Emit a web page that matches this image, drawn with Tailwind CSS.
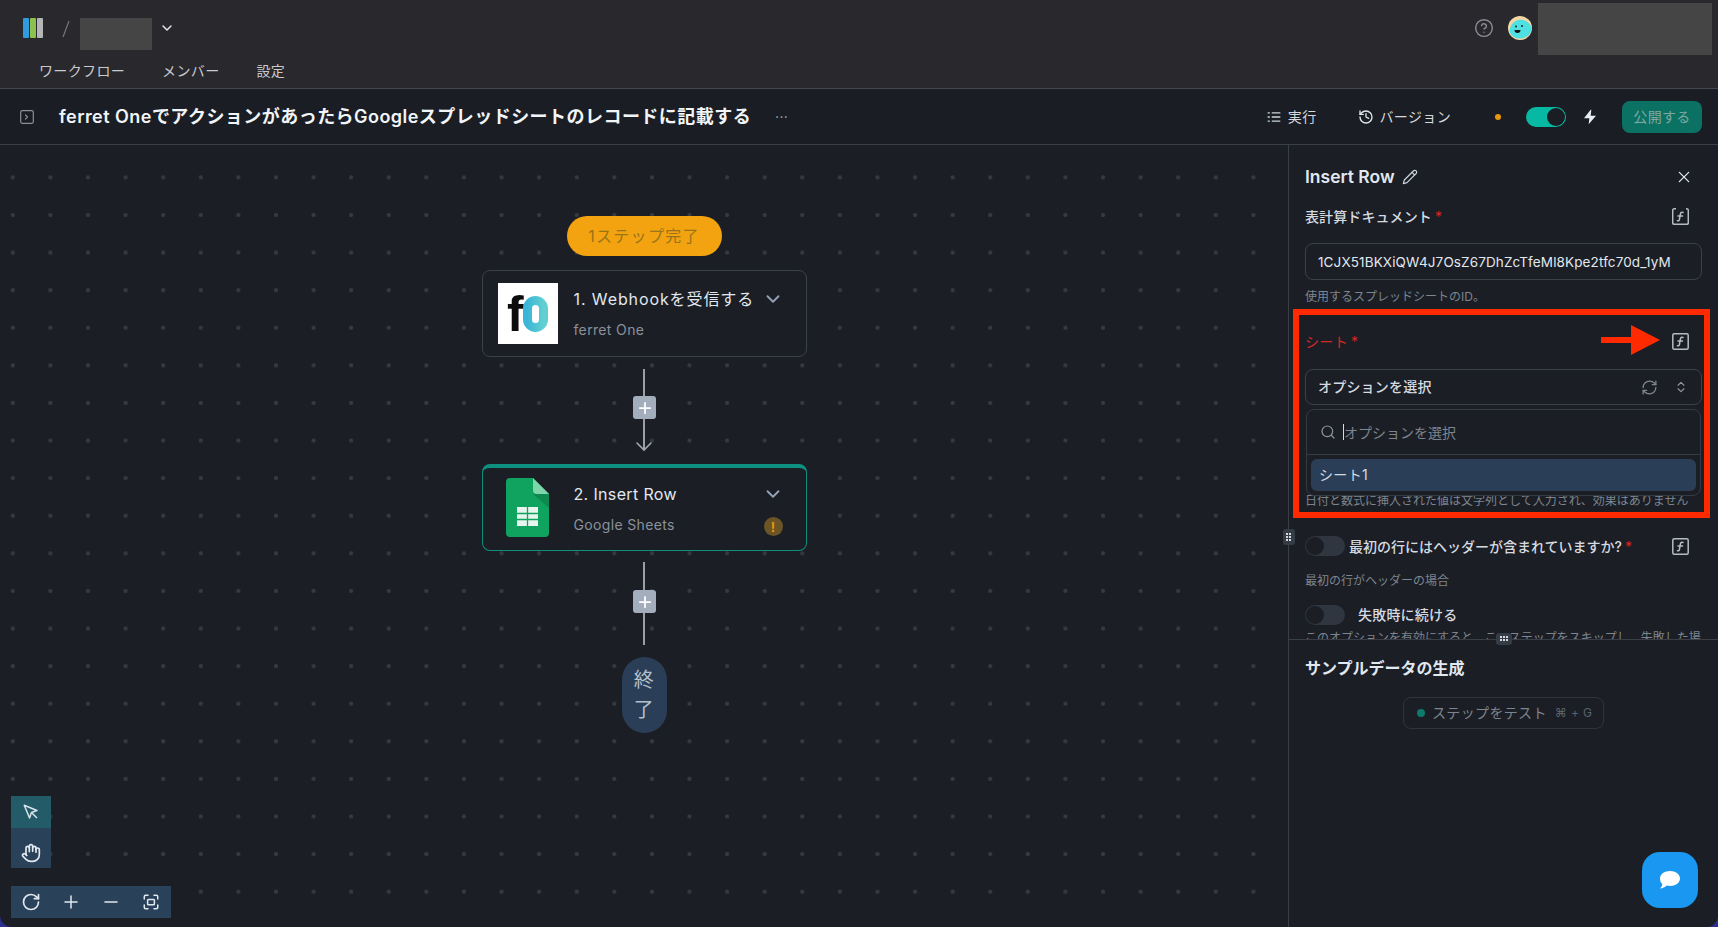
<!DOCTYPE html>
<html lang="ja">
<head>
<meta charset="utf-8">
<script src="https://cdn.jsdelivr.net/npm/@tailwindcss/browser@4"></script>
<title>Workflow</title>
</head>
<body class="bg-[#2b2f8f] overflow-hidden">
<div class="relative w-[1718px] h-[927px] flex flex-col overflow-hidden rounded-b-[12px] bg-[#1b1e24] font-['Inter','Noto_Sans_CJK_JP',sans-serif] text-[14px] tracking-wide text-[#e2e8f0]">

  <header class="h-[89px] shrink-0 bg-[#28282d] border-b border-[#44474d] flex flex-col">
    <div class="h-[58px] flex items-start pl-[23px] pr-[6px] pt-[3px]">
      <svg class="mt-[15px]" width="20" height="20" viewBox="0 0 20 20"><rect x="0" y="0" width="6" height="20" rx="1" fill="#2f9be0"/><rect x="7" y="0" width="6" height="20" rx="1" fill="#8cc152"/><rect x="14" y="0" width="6" height="20" rx="1" fill="#b4b6b8"/></svg>
      <svg class="mt-[17px] ml-[19px]" width="8" height="18" viewBox="0 0 8 18" fill="none" stroke="#77797e" stroke-width="1.200"><path d="M7 1 1 17"/></svg>
      <div class="mt-[15px] ml-[10px] w-[72px] h-[32px] bg-[#454545]"></div>
      <svg class="mt-[17px] ml-[7px]" width="16" height="16" viewBox="0 0 24 24" fill="none" stroke="#e5e7eb" stroke-width="2.200" stroke-linecap="round" stroke-linejoin="round"><path d="m6 9 6 6 6-6"/></svg>
      <div class="flex-1"></div>
      <svg class="mt-[15px]" width="20" height="20" viewBox="0 0 24 24" fill="none" stroke="#8d8f94" stroke-width="1.700" stroke-linecap="round" stroke-linejoin="round"><circle cx="12" cy="12" r="10"/><path d="M9.090 9a3 3 0 0 1 5.830 1c0 2-3 3-3 3"/><path d="M12 17h.010"/></svg>
      <svg class="mt-[13px] ml-[14px]" width="24" height="24" viewBox="0 0 24 24"><circle cx="12" cy="12" r="12" fill="#f5d5a4"/><path d="M2 17a11 11 0 0 1 8-13 12 12 0 0 1 14 8 12 12 0 0 1-22 5z" fill="#4fe0e2"/><circle cx="8" cy="10.500" r="1" fill="#222"/><circle cx="14" cy="10" r="1" fill="#222"/><path d="M6.500 14h6a3 3 0 0 1-6 0z" fill="#111"/></svg>
      <div class="ml-[6px] w-[174px] h-[52px] bg-[#454545]"></div>
    </div>
    <nav class="flex gap-[37px] pl-[39px] text-[14px] leading-[20px] text-[#c9cacd] mt-[3px]">
      <span>ワークフロー</span><span>メンバー</span><span>設定</span>
    </nav>
  </header>

  <div class="h-[56px] shrink-0 bg-[#1a1d23] border-b border-[#3a3f47] flex items-center pl-[20px] pr-[16px]">
    <svg width="14" height="14" viewBox="0 0 14 14" fill="none" stroke="#8b8f96" stroke-width="1.200"><rect x=".7" y=".7" width="12.600" height="12.600" rx="1.500"/><path d="m5.500 5 2 2-2 2" stroke-linecap="round" stroke-linejoin="round"/></svg>
    <h1 class="ml-[25px] w-[688px] text-[18px] leading-[28px] tracking-[0.46px] font-semibold text-[#f1f5f9] whitespace-nowrap">ferret OneでアクションがあったらGoogleスプレッドシートのレコードに記載する</h1>
    <span class="ml-[28px] text-[#a3a7ad] text-[14px] leading-none">···</span>
    <div class="flex-1"></div>
    <svg width="14" height="14" viewBox="0 0 24 24" fill="none" stroke="#cbd5e1" stroke-width="2.400" stroke-linecap="round"><path d="M9 5h13M9 12h13M9 19h13M2 5h2M2 12h2M2 19h2"/></svg>
    <span class="ml-[7px] text-[#d5d9df]">実行</span>
    <svg class="ml-[41px]" width="16" height="16" viewBox="0 0 24 24" fill="none" stroke="#e2e8f0" stroke-width="2" stroke-linecap="round" stroke-linejoin="round"><path d="M3 12a9 9 0 1 0 9-9 9.750 9.750 0 0 0-6.740 2.740L3 8"/><path d="M3 3v5h5"/><path d="M12 7v5l4 2"/></svg>
    <span class="ml-[6px] text-[#d5d9df]">バージョン</span>
    <span class="ml-[44px] w-[6px] h-[6px] rounded-full bg-[#e8960c]"></span>
    <span class="ml-[25px] relative w-[40px] h-[20px] rounded-full bg-[#07b8a2]"><span class="absolute right-[1px] top-[1px] w-[18px] h-[18px] rounded-full bg-[#1a1d23]"></span></span>
    <svg class="ml-[16px]" width="16" height="16" viewBox="0 0 24 24" fill="#e8edf3"><path d="M13 1 3 14h8l-1 9 11-13h-8l1-9z"/></svg>
    <button class="ml-[24px] w-[80px] h-[32px] rounded-[8px] bg-[#0b7163] text-[#7fa8a1] text-[14px]">公開する</button>
  </div>

  <div class="flex-1 flex min-h-0">
    <main class="relative w-[1288px] shrink-0 flex flex-col items-center pt-[71px] bg-[radial-gradient(circle,#36393e_1.8px,transparent_2.4px)] bg-[size:37.6px_37.6px] bg-[position:-6px_13.600px]">
      <div class="w-[155px] h-[40px] rounded-full bg-[#f2a30f] text-[#99741a] text-[16px] tracking-[1.300px] flex items-center justify-center">1ステップ完了</div>

      <section class="mt-[14px] w-[325px] h-[87px] rounded-[8px] border border-[#3b414b] bg-[#1b1e24] flex pl-[15px] pt-[12px]">
        <div class="w-[60px] h-[61px] bg-white overflow-hidden">
          <svg width="60" height="61" viewBox="0 0 60 61"><defs><linearGradient id="g" x1="0" x2="1" y1="0" y2="0"><stop offset="0" stop-color="#3bb6d6"/><stop offset="1" stop-color="#62d0d2"/></linearGradient></defs><text x="9" y="48" font-family="Liberation Sans" font-weight="700" font-size="50" fill="#0c0c0c">f</text><rect x="29.500" y="17.500" width="16" height="27" rx="8" fill="none" stroke="url(#g)" stroke-width="9"/></svg>
        </div>
        <div class="ml-[16px] w-[209px]">
          <div class="flex items-center justify-between h-[24px] mt-[4px]"><span class="text-[16px] tracking-[0.9px] text-[#e2e8f0] whitespace-nowrap">1. Webhookを受信する</span><svg class="-mr-[1px]" width="22" height="22" viewBox="0 0 24 24" fill="none" stroke="#94a3b8" stroke-width="2" stroke-linecap="round" stroke-linejoin="round"><path d="m6 9 6 6 6-6"/></svg></div>
          <div class="mt-[9px] text-[14px] leading-[20px] text-[#8a919c]">ferret One</div>
        </div>
      </section>

      <div class="relative w-[24px] h-[83px] mt-[12px] flex flex-col items-center">
        <div class="w-[2px] h-[81px] bg-[#9a9ea6]"></div>
        <svg class="absolute left-[3px] bottom-0" width="18" height="11" viewBox="0 0 18 11" fill="none" stroke="#a3a7ae" stroke-width="1.600" stroke-linecap="round"><path d="m2 2 7 7 7-7"/></svg>
        <div class="absolute left-[1px] top-[27px] w-[23px] h-[23px] rounded-[3px] bg-[#a3adbb] flex items-center justify-center"><svg width="14" height="14" viewBox="0 0 24 24" fill="none" stroke="#fff" stroke-width="3" stroke-linecap="round"><path d="M12 3v18M3 12h18"/></svg></div>
      </div>

      <section class="mt-[12px] w-[325px] h-[87px] rounded-[8px] border border-[#0d9080] border-t-[4px] bg-[#1b1e24] flex pt-[10px]">
        <div class="ml-[23px] w-[43px] h-[59px]">
          <svg width="43" height="59" viewBox="0 0 43 59"><path d="M4 0h23l16 16v39a4 4 0 0 1-4 4H4a4 4 0 0 1-4-4V4a4 4 0 0 1 4-4z" fill="#0fa35f"/><path d="M27 0l16 16H31a4 4 0 0 1-4-4z" fill="#7fd6ab"/><path d="M27 16l16 14V16z" fill="#0c8a50"/><path d="M11 29h21v19H11z" fill="#e8f5ee"/><path d="M11 35.500h21M11 41.500h21M21.500 29v19" stroke="#0fa35f" stroke-width="1.300"/></svg>
        </div>
        <div class="ml-[25px] w-[209px]">
          <div class="flex items-center justify-between h-[24px] mt-[4px]"><span class="text-[16px] text-[#e2e8f0]">2. Insert Row</span><svg class="-mr-[1px]" width="22" height="22" viewBox="0 0 24 24" fill="none" stroke="#94a3b8" stroke-width="2" stroke-linecap="round" stroke-linejoin="round"><path d="m6 9 6 6 6-6"/></svg></div>
          <div class="mt-[9px] flex items-start justify-between text-[14px] leading-[20px] text-[#8a919c]"><span>Google Sheets</span><span class="w-[19px] h-[19px] mt-[2px] rounded-full bg-[#6b5426] text-[#e8960c] text-[13px] font-bold flex items-center justify-center">!</span></div>
        </div>
      </section>

      <div class="relative w-[24px] h-[83px] mt-[11px] flex flex-col items-center">
        <div class="w-[2px] h-[83px] bg-[#9a9ea6]"></div>
        <div class="absolute left-[1px] top-[28px] w-[23px] h-[23px] rounded-[3px] bg-[#a3adbb] flex items-center justify-center"><svg width="14" height="14" viewBox="0 0 24 24" fill="none" stroke="#fff" stroke-width="3" stroke-linecap="round"><path d="M12 3v18M3 12h18"/></svg></div>
      </div>

      <div class="mt-[12px] w-[45px] h-[76px] rounded-full bg-[#2a3f57] text-[#b4bfcc] flex items-center justify-center"><span class="w-[22px] text-[20px] leading-[30px] text-center">終了</span></div>

      <div class="absolute left-[11px] top-[651px] w-[40px]">
        <div class="h-[32px] bg-[#245b68] flex items-center justify-center"><svg width="18" height="18" viewBox="0 0 24 24" fill="none" stroke="#d7e3ea" stroke-width="2" stroke-linejoin="round"><path d="M3 3l7.070 16.970 2.510-7.390 7.390-2.510L3 3z"/><path d="m13 13 7 7"/></svg></div>
        <div class="h-[40px] bg-[#2a4259] flex items-start justify-center pt-[15px]"><svg width="20" height="20" viewBox="0 0 24 24" fill="none" stroke="#e2e8f0" stroke-width="2" stroke-linecap="round" stroke-linejoin="round"><path d="M18 11V6a2 2 0 0 0-2-2a2 2 0 0 0-2 2"/><path d="M14 10V4a2 2 0 0 0-2-2a2 2 0 0 0-2 2v2"/><path d="M10 10.500V6a2 2 0 0 0-2-2a2 2 0 0 0-2 2v8"/><path d="M18 8a2 2 0 1 1 4 0v6a8 8 0 0 1-8 8h-2c-2.800 0-4.500-.860-5.990-2.340l-3.600-3.600a2 2 0 0 1 2.830-2.820L7 15"/></svg></div>
      </div>
      <div class="absolute left-[11px] top-[741px] w-[160px] h-[32px] bg-[#2a4259] grid grid-cols-4 items-center justify-items-center">
        <svg width="20" height="20" viewBox="0 0 24 24" fill="none" stroke="#e2e8f0" stroke-width="2" stroke-linecap="round" stroke-linejoin="round"><path d="M21 12a9 9 0 1 1-9-9c2.520 0 4.930 1 6.740 2.740L21 8"/><path d="M21 3v5h-5"/></svg>
        <svg width="18" height="18" viewBox="0 0 24 24" fill="none" stroke="#e2e8f0" stroke-width="2" stroke-linecap="round"><path d="M12 4v16M4 12h16"/></svg>
        <svg width="18" height="18" viewBox="0 0 24 24" fill="none" stroke="#e2e8f0" stroke-width="2" stroke-linecap="round"><path d="M4 12h16"/></svg>
        <svg width="18" height="18" viewBox="0 0 24 24" fill="none" stroke="#e2e8f0" stroke-width="2" stroke-linecap="round" stroke-linejoin="round"><path d="M3 8V5a2 2 0 0 1 2-2h3M16 3h3a2 2 0 0 1 2 2v3M21 16v3a2 2 0 0 1-2 2h-3M8 21H5a2 2 0 0 1-2-2v-3"/><rect x="7.500" y="8.500" width="9" height="7" rx="1"/></svg>
      </div>
    </main>

    <aside class="relative flex-1 border-l border-[#3a3f47] flex flex-col min-w-0 bg-[#1b1e24]">
      <div class="relative h-[494px] shrink-0 overflow-hidden px-[16px] pt-[20px]">
        <div class="flex items-center h-[24px]">
          <h2 class="text-[17.500px] tracking-normal font-semibold text-[#e2e8f0]">Insert Row</h2>
          <svg class="ml-[7px]" width="16" height="16" viewBox="0 0 24 24" fill="none" stroke="#cbd5e1" stroke-width="1.800" stroke-linecap="round" stroke-linejoin="round"><path d="M17 3a2.850 2.830 0 1 1 4 4L7.500 20.500 2 22l1.500-5.500Z"/><path d="m15 5 4 4"/></svg>
          <div class="flex-1"></div>
          <svg class="mr-[11px]" width="14" height="14" viewBox="0 0 24 24" fill="none" stroke="#e2e8f0" stroke-width="2.200" stroke-linecap="round"><path d="M20 4 4 20M4 4l16 16"/></svg>
        </div>

        <div class="mt-[17px] h-[20px] flex items-center pr-[13px]">
          <span class="font-medium text-[14px] tracking-[0.1px] text-[#d5dae1]">表計算ドキュメント</span><span class="ml-[3px] text-[#dc2626]">*</span>
          <div class="flex-1"></div>
          <svg width="17" height="17" viewBox="0 0 17 17" fill="none" stroke="#b4bcc8" stroke-width="1.500"><path d="M4 .8H2.200a1.500 1.500 0 0 0-1.500 1.500v12.500a1.500 1.500 0 0 0 1.500 1.500h12.600a1.500 1.500 0 0 0 1.500-1.500V2.300A1.500 1.500 0 0 0 14.800.8H14"/><path d="M11 4.500c-1.500-.5-2.300 0-2.600 1.500l-1 5.500c-.2 1-.8 1.500-2 1.200M6 8h4.500" stroke-linecap="round"/></svg>
        </div>

        <div class="mt-[17px] h-[37px] rounded-[8px] border border-[#3b414b] px-[12px] pt-[1px] flex items-center text-[#e2e8f0] text-[13.500px] tracking-[0.12px] whitespace-nowrap">1CJX51BKXiQW4J7OsZ67DhZcTfeMl8Kpe2tfc70d_1yM</div>
        <p class="mt-[9px] text-[12px] leading-[16px] tracking-normal text-[#7d8590]">使用するスプレッドシートのID。</p>

        <div class="mt-[26px] h-[20px] flex items-center pr-[13px]">
          <span class="text-[14px] text-[#dc2626]">シート</span><span class="ml-[3px] text-[#dc2626]">*</span>
          <div class="flex-1"></div>
          <svg width="17" height="17" viewBox="0 0 17 17" fill="none" stroke="#b4bcc8" stroke-width="1.500"><rect x=".8" y=".8" width="15.400" height="15.400" rx="1.500"/><path d="M11 4.500c-1.500-.5-2.300 0-2.600 1.500l-1 5.500c-.2 1-.8 1.500-2 1.200M6 8h4.500" stroke-linecap="round"/></svg>
        </div>

        <div class="mt-[18px] h-[36px] rounded-[8px] border border-[#3b414b] pl-[12px] pr-[13px] flex items-center">
          <span class="font-medium text-[14px] tracking-[0.2px] text-[#d5dae1] -mt-[2px]">オプションを選択</span>
          <div class="flex-1"></div>
          <svg width="17" height="17" viewBox="0 0 24 24" fill="none" stroke="#7f8691" stroke-width="1.800" stroke-linecap="round" stroke-linejoin="round"><path d="M3 12a9 9 0 0 1 9-9 9.750 9.750 0 0 1 6.740 2.740L21 8"/><path d="M21 3v5h-5"/><path d="M21 12a9 9 0 0 1-9 9 9.750 9.750 0 0 1-6.740-2.740L3 16"/><path d="M8 16H3v5"/></svg>
          <svg class="ml-[16px]" width="14" height="16" viewBox="0 0 24 24" fill="none" stroke="#8f96a1" stroke-width="2" stroke-linecap="round" stroke-linejoin="round"><path d="m7 15 5 5 5-5"/><path d="m7 9 5-5 5 5"/></svg>
        </div>

        <p class="mt-[88px] text-[12px] leading-[16px] tracking-normal text-[#7d8590] whitespace-nowrap">日付と数式に挿入された値は文字列として入力され、効果はありません</p>

        <div class="mt-[27px] h-[20px] flex items-center pr-[13px]">
          <span class="relative w-[40px] h-[20px] rounded-full bg-[#2f3640]"><span class="absolute left-[1px] top-[1px] w-[18px] h-[18px] rounded-full bg-[#1b1e24]"></span></span>
          <span class="ml-[4px] text-[14px] tracking-normal font-medium text-[#d5dae1]">最初の行にはヘッダーが含まれていますか?</span><span class="ml-[3px] text-[#dc2626]">*</span>
          <div class="flex-1"></div>
          <svg width="17" height="17" viewBox="0 0 17 17" fill="none" stroke="#b4bcc8" stroke-width="1.500"><rect x=".8" y=".8" width="15.400" height="15.400" rx="1.500"/><path d="M11 4.500c-1.500-.5-2.300 0-2.600 1.500l-1 5.500c-.2 1-.8 1.500-2 1.200M6 8h4.500" stroke-linecap="round"/></svg>
        </div>
        <p class="mt-[17px] text-[12px] leading-[16px] tracking-normal text-[#7d8590]">最初の行がヘッダーの場合</p>
        <div class="mt-[16px] h-[20px] flex items-center">
          <span class="relative w-[40px] h-[20px] rounded-full bg-[#2f3640]"><span class="absolute left-[1px] top-[1px] w-[18px] h-[18px] rounded-full bg-[#1b1e24]"></span></span>
          <span class="ml-[13px] -mt-[2px] text-[14px] tracking-[0.2px] font-medium text-[#d5dae1]">失敗時に続ける</span>
        </div>
        <p class="mt-[5px] text-[12px] leading-[16px] tracking-normal text-[#7d8590]">このオプションを有効にすると、このステップをスキップし、失敗した場合でもフローを続行します。</p>

        <div class="absolute left-[17px] top-[264px] w-[395px] h-[87px] rounded-[8px] border border-[#353b44] bg-[#1b1e24]">
          <div class="h-[45px] border-b border-[#353b44] flex items-center pl-[13px]">
            <svg width="16" height="16" viewBox="0 0 24 24" fill="none" stroke="#8f96a1" stroke-width="1.800" stroke-linecap="round"><circle cx="11" cy="11" r="8"/><path d="m21 21-4.300-4.300"/></svg>
            <span class="ml-[7px] w-px h-[16px] bg-[#d5dae1]"></span>
            <span class="text-[14px] tracking-normal text-[#7d8590]">オプションを選択</span>
          </div>
          <div class="mx-[4px] mt-[4px] h-[32px] rounded-[6px] bg-[#2a3f57] flex items-center pl-[8px] pb-[2px] text-[14px] text-[#d5dae1]">シート1</div>
        </div>
      </div>

      <div class="h-[288px] border-t border-[#3a3f47] px-[16px] relative">
        <div class="absolute left-[207px] -top-[7px] w-[16px] h-[12px] rounded-[3px] bg-[#353c46] flex items-center justify-center"><svg width="10" height="6" viewBox="0 0 10 6" fill="#d5dae1"><rect x="1" y="0" width="2" height="2"/><rect x="4" y="0" width="2" height="2"/><rect x="7" y="0" width="2" height="2"/><rect x="1" y="3" width="2" height="2"/><rect x="4" y="3" width="2" height="2"/><rect x="7" y="3" width="2" height="2"/></svg></div>
        <h3 class="mt-[16px] text-[16px] tracking-normal leading-[24px] font-semibold text-[#e2e8f0]">サンプルデータの生成</h3>
        <button class="mt-[17px] mx-auto w-[201px] h-[32px] rounded-[8px] border border-[#2f343c] flex items-center pl-[13px] pb-[1px]">
          <span class="w-[8px] h-[8px] rounded-full bg-[#0d7a6b]"></span>
          <span class="ml-[7px] text-[14px] text-[#7d8590]">ステップをテスト</span>
          <span class="ml-[8px] text-[12px] text-[#5c636d] whitespace-nowrap">⌘ + G</span>
        </button>
      </div>

      <div class="absolute -left-[6px] top-[384px] w-[12px] h-[16px] rounded-[3px] bg-[#353c46] flex items-center justify-center"><svg width="6" height="10" viewBox="0 0 6 10" fill="#d5dae1"><rect x="0" y="1" width="2" height="2"/><rect x="3" y="1" width="2" height="2"/><rect x="0" y="4" width="2" height="2"/><rect x="3" y="4" width="2" height="2"/><rect x="0" y="7" width="2" height="2"/><rect x="3" y="7" width="2" height="2"/></svg></div>

      <div class="absolute left-[4px] top-[164px] w-[417px] h-[209px] border-[6px] border-[#ff2a00] pointer-events-none"></div>
      <svg class="absolute left-[312px] top-[180px]" width="59" height="30" viewBox="0 0 59 30" fill="#ff2a00"><path d="M0 12h30V0l29 15-29 15V18H0z"/></svg>

      <button class="absolute left-[353px] top-[707px] w-[56px] h-[56px] rounded-[18px] bg-[#1a97f0] flex items-center justify-center"><svg width="22" height="20" viewBox="0 0 22 20" fill="#fff"><path d="M11 1c5.500 0 10 3 10 7.500S16.500 16 11 16c-1.200 0-2.300-.1-3.300-.4C6 17.300 3.500 18.500 1 18.500c1.300-1 2.200-2.600 2.300-4.400C1.800 12.800 1 10.800 1 8.500 1 4 5.500 1 11 1z"/></svg></button>
    </aside>
  </div>
</div>
</body>
</html>
